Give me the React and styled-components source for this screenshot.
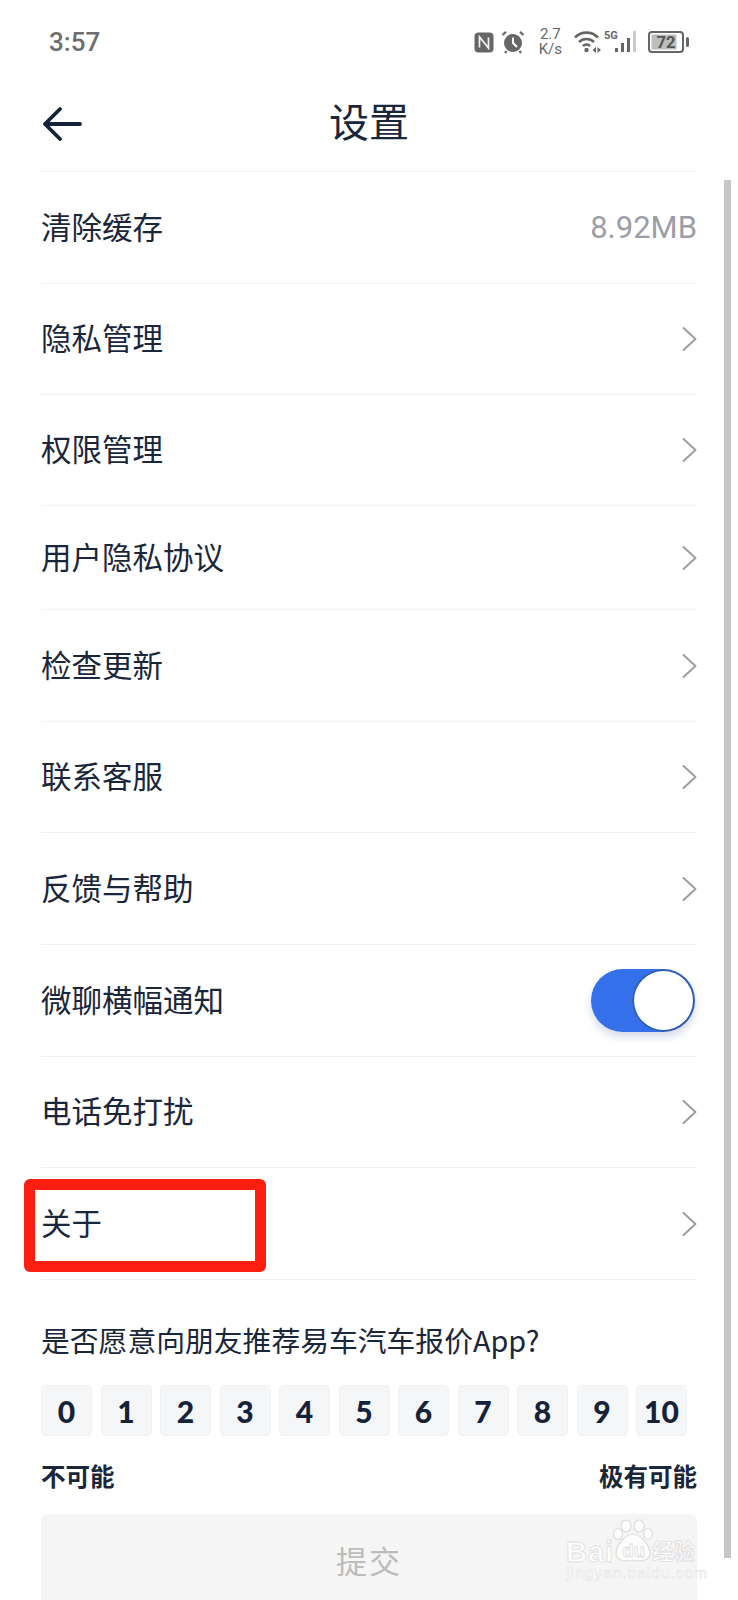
import React from 'react';
import styled, { createGlobalStyle } from 'styled-components';

const GlobalStyle = createGlobalStyle`
  html, body {
    margin: 0;
    padding: 0;
    background: #fff;
  }
  body {
    font-family: "Noto Sans CJK SC", "Noto Sans", sans-serif;
    color: #1a2639;
  }
`;

const Page = styled.div`
  position: relative;
  width: 738px;
  height: 1600px;
  overflow: hidden;
  background: #fff;
`;

const StatusBar = styled.div`
  height: 84px;
  padding: 0 48px 0 49px;
  box-sizing: border-box;
  display: flex;
  align-items: center;
  justify-content: space-between;
`;

const Time = styled.span`
  font-family: Roboto, sans-serif;
  font-size: 26px;
  font-weight: 500;
  color: #6e6e6e;
`;

const StatusIcons = styled.div`
  display: flex;
  align-items: center;
  gap: 7px;
`;

const Speed = styled.div`
  font-family: Roboto, sans-serif;
  font-size: 15px;
  line-height: 15px;
  color: #666;
  text-align: center;
  margin: 0 5px 0 7px;
`;

const SignalSlot = styled.div`
  display: flex;
  margin: 0 3px 0 -4px;
`;

const NavBar = styled.div`
  height: 88px;
  margin: 0 41px;
  padding-bottom: 16px;
  display: flex;
  align-items: center;
  justify-content: center;
  position: relative;
  border-bottom: 1px solid #efefef;
  box-sizing: border-box;
`;

const BackButton = styled.div`
  position: absolute;
  left: 2px;
  top: 20px;
  line-height: 0;
`;

const Title = styled.h1`
  margin: 0;
  font-size: 40px;
  font-weight: 400;
  color: #1a2639;
`;

const List = styled.div`
  margin: 0 41px;
`;

const Row = styled.div`
  height: ${(p) => p.$h}px;
  box-sizing: border-box;
  display: flex;
  align-items: center;
  justify-content: space-between;
  border-bottom: 1px solid #f1f1f1;
  font-size: 30.5px;
  color: #1a2639;
`;

const Label = styled.span`
  margin-bottom: 4px;
`;

const Value = styled.span`
  font-family: Roboto, sans-serif;
  font-size: 31px;
  color: #9b9ea6;
`;

const Toggle = styled.div`
  width: 104px;
  height: 63px;
  margin-right: 2px;
  border-radius: 32px;
  background: #3470ea;
  box-shadow: 0 5px 8px rgba(40, 70, 140, 0.2);
  display: flex;
  align-items: center;
  justify-content: flex-end;
  padding-right: 2px;
  box-sizing: border-box;
`;

const Knob = styled.div`
  width: 59px;
  height: 59px;
  border-radius: 50%;
  background: #fff;
  box-shadow: 0 0 0 1.5px #3059a8;
`;

const Survey = styled.div`
  margin: 0 41px;
`;

const Question = styled.div`
  font-size: 28.8px;
  line-height: 40px;
  padding-top: 40px;
  color: #1a2639;
`;

const Scores = styled.div`
  display: flex;
  gap: 8.5px;
  margin-top: 25px;
`;

const Score = styled.div`
  width: 51px;
  height: 51px;
  flex: none;
  border-radius: 5px;
  background: #f5f6f7;
  border: 1px solid #f0f0f0;
  box-sizing: border-box;
  display: flex;
  align-items: center;
  justify-content: center;
  font-family: Lato, sans-serif;
  font-size: 30px;
  font-weight: 900;
  color: #14233a;
`;

const Scale = styled.div`
  display: flex;
  justify-content: space-between;
  margin-top: 23px;
  font-size: 24.5px;
  line-height: 34px;
  font-weight: 700;
  color: #1a2639;
`;

const Submit = styled.div`
  margin-top: 21px;
  height: 110px;
  padding-bottom: 20px;
  box-sizing: border-box;
  border-radius: 8px;
  background: #f5f5f5;
  color: #bcbcbc;
  font-size: 31px;
  display: flex;
  align-items: center;
  justify-content: center;
  letter-spacing: 2px;
`;

const ScrollThumb = styled.div`
  position: absolute;
  left: 724px;
  top: 180px;
  width: 7px;
  height: 1378px;
  background: #c6c6c6;
`;

const RedMark = styled.div`
  position: absolute;
  left: 24px;
  top: 1179px;
  width: 242px;
  height: 93px;
  border: 11px solid #fb1f12;
  border-radius: 6px;
  box-sizing: border-box;
`;

const Watermark = styled.div`
  position: absolute;
  left: 566px;
  top: 1518px;
  width: 140px;
  height: 70px;
  color: #fdfdfd;
  -webkit-text-stroke: 0.8px #dfdfdf;
  font-family: "Liberation Sans", sans-serif;
`;

const MarkBai = styled.span`
  position: absolute;
  left: 0;
  top: 18px;
  font-size: 29px;
  font-weight: 700;
  letter-spacing: 1px;
`;

const MarkDu = styled.span`
  position: absolute;
  left: 56px;
  top: 22px;
  font-size: 19px;
  font-weight: 700;
`;

const MarkCn = styled.span`
  position: absolute;
  left: 86px;
  top: 16px;
  font-family: "Noto Sans CJK SC", sans-serif;
  font-size: 21.5px;
  font-weight: 700;
  white-space: nowrap;
`;

const MarkUrl = styled.span`
  position: absolute;
  left: 0;
  top: 46px;
  font-size: 15.5px;
  letter-spacing: 1px;
  white-space: nowrap;
  -webkit-text-stroke: 0.5px #e2e2e2;
`;

const PawWrap = styled.div`
  position: absolute;
  left: 46px;
  top: 1px;
  line-height: 0;
`;

const Chevron = () => (
  <svg width="15" height="26" viewBox="0 0 15 26" fill="none" stroke="#9d9d9d" strokeWidth="2" strokeLinecap="round" strokeLinejoin="round">
    <path d="M1.5 2 L13.5 13 L1.5 24" />
  </svg>
);

const BackArrow = () => (
  <svg width="40" height="40" viewBox="0 0 40 40" fill="none" stroke="#14233a" strokeWidth="3.8" strokeLinecap="round" strokeLinejoin="round">
    <path d="M2 20 H37 M17 5 L2 20 L17 35" />
  </svg>
);

const NfcIcon = () => (
  <svg width="20" height="21" viewBox="0 0 20 21">
    <rect width="19" height="20" x="0.5" y="0.5" rx="4" fill="#666" />
    <path d="M5.5 15.5 V5 L14.5 16 V5.5" fill="none" stroke="#f2f2f2" strokeWidth="1.7" />
  </svg>
);

const AlarmIcon = () => (
  <svg width="24" height="24" viewBox="0 0 24 24">
    <circle cx="12" cy="13" r="9" fill="#666" />
    <path d="M12 7.5 V13 L16 17" fill="none" stroke="#fff" strokeWidth="2" />
    <path d="M1.5 5 L5 1.8 M22.5 5 L19 1.8 M5.5 21 L4 23 M18.5 21 L20 23" fill="none" stroke="#666" strokeWidth="2.2" />
  </svg>
);

const WifiIcon = () => (
  <svg width="27" height="24" viewBox="0 0 27 24" fill="none" stroke="#666" strokeWidth="2.6">
    <path d="M1 7.5 C7.5 1 17.5 1 24 7.5" />
    <path d="M5 12 C9 8 16 8 20 12" />
    <path d="M9 16 C11 14 14 14 16 16" />
    <circle cx="12.5" cy="20" r="2.2" fill="#666" stroke="none" />
    <path d="M22 17 L18.5 20 L22 23 Z M23.5 17 L27 20 L23.5 23 Z" fill="#666" stroke="none" />
  </svg>
);

const SignalIcon = () => (
  <svg width="34" height="24" viewBox="0 0 34 24">
    <text x="0" y="9" fontFamily="Roboto, sans-serif" fontSize="11" fontWeight="700" fill="#666">5G</text>
    <rect x="11" y="18" width="3" height="4" fill="#666" />
    <rect x="17" y="13" width="3" height="9" fill="#666" />
    <rect x="23" y="8" width="3" height="14" fill="#666" />
    <rect x="29" y="1" width="3" height="21" fill="#c9c9c9" />
  </svg>
);

const BatteryIcon = () => (
  <svg width="42" height="22" viewBox="0 0 42 22">
    <rect x="1" y="1" width="34" height="20" rx="3" fill="#fff" stroke="#666" strokeWidth="2" />
    <rect x="3.5" y="3.5" width="25" height="15" fill="#bdbdbd" />
    <text x="18" y="17" textAnchor="middle" fontFamily="Roboto, sans-serif" fontSize="16.5" fontWeight="700" fill="#555">72</text>
    <rect x="38" y="6" width="3" height="10" rx="1.5" fill="#666" />
  </svg>
);

const PawIcon = () => (
  <svg width="42" height="44" viewBox="0 0 42 44" fill="#fdfdfd" stroke="#dcdcdc" strokeWidth="1.2">
    <ellipse cx="6" cy="15" rx="4.5" ry="5.5" />
    <ellipse cx="14" cy="7" rx="5" ry="6" />
    <ellipse cx="27" cy="7" rx="5" ry="6" />
    <ellipse cx="36" cy="15" rx="4.5" ry="5.5" />
    <path d="M21 15 C14 15 4 26 4 34 C4 42 13 43 21 41 C29 43 38 42 38 34 C38 26 28 15 21 15 Z" />
  </svg>
);

const rows = [
  { label: '清除缓存', h: 112, value: '8.92MB' },
  { label: '隐私管理', h: 111 },
  { label: '权限管理', h: 111 },
  { label: '用户隐私协议', h: 104 },
  { label: '检查更新', h: 112 },
  { label: '联系客服', h: 111 },
  { label: '反馈与帮助', h: 112 },
  { label: '微聊横幅通知', h: 112, toggle: true },
  { label: '电话免打扰', h: 111 },
  { label: '关于', h: 112 },
];

const scores = [0, 1, 2, 3, 4, 5, 6, 7, 8, 9, 10];

export default function App() {
  return (
    <Page>
      <GlobalStyle />
      <StatusBar>
        <Time>3:57</Time>
        <StatusIcons>
          <NfcIcon />
          <AlarmIcon />
          <Speed>2.7<br />K/s</Speed>
          <WifiIcon />
          <SignalSlot><SignalIcon /></SignalSlot>
          <BatteryIcon />
        </StatusIcons>
      </StatusBar>
      <NavBar>
        <BackButton><BackArrow /></BackButton>
        <Title>设置</Title>
      </NavBar>
      <List>
        {rows.map((r) => (
          <Row key={r.label} $h={r.h}>
            <Label>{r.label}</Label>
            {r.value && <Value>{r.value}</Value>}
            {r.toggle && <Toggle><Knob /></Toggle>}
            {!r.value && !r.toggle && <Chevron />}
          </Row>
        ))}
      </List>
      <Survey>
        <Question>是否愿意向朋友推荐易车汽车报价App?</Question>
        <Scores>
          {scores.map((n) => <Score key={n}>{n}</Score>)}
        </Scores>
        <Scale>
          <span>不可能</span>
          <span>极有可能</span>
        </Scale>
        <Submit>提交</Submit>
      </Survey>
      <ScrollThumb />
      <RedMark />
      <Watermark>
        <MarkBai>Bai</MarkBai>
        <PawWrap><PawIcon /></PawWrap>
        <MarkDu>du</MarkDu>
        <MarkCn>经验</MarkCn>
        <MarkUrl>jingyan.baidu.com</MarkUrl>
      </Watermark>
    </Page>
  );
}
